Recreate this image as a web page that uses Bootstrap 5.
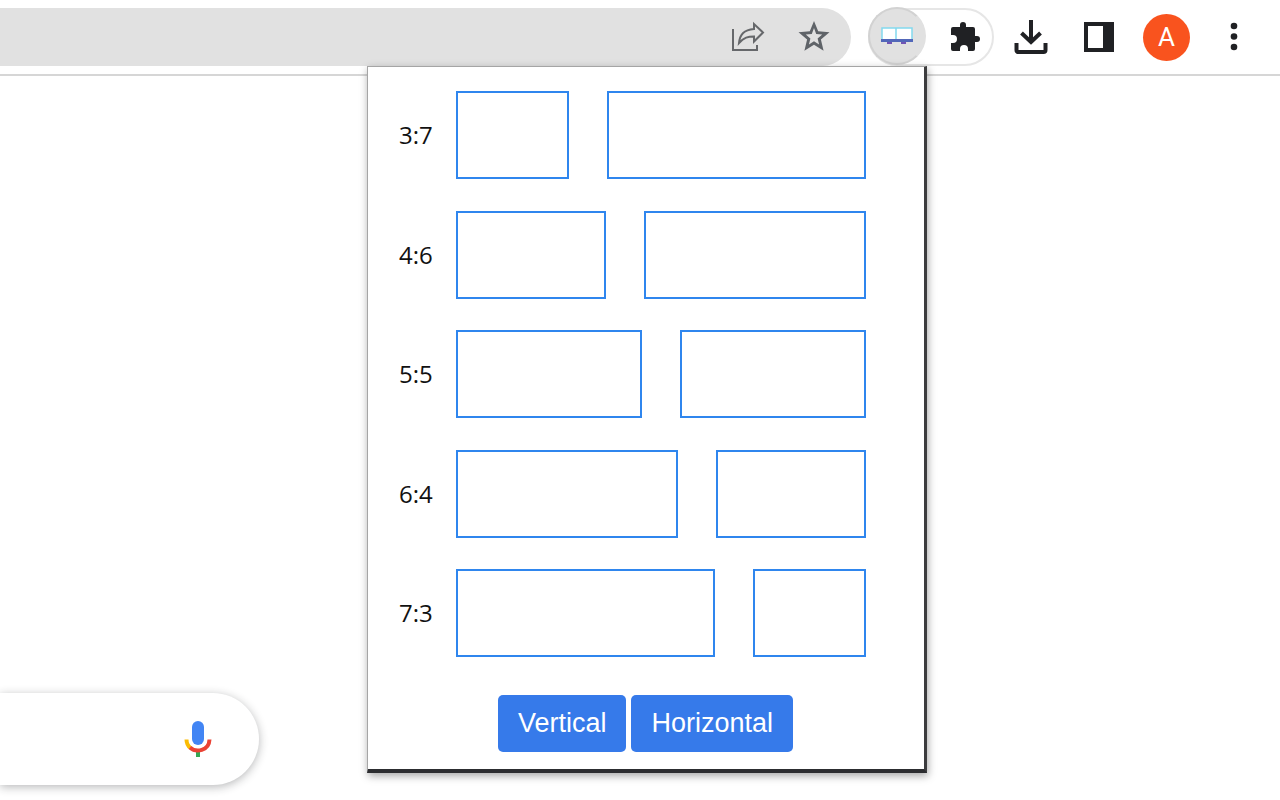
<!DOCTYPE html>
<html lang="en">
<head>
<meta charset="utf-8">
<meta name="viewport" content="width=device-width, initial-scale=1">
<title>Split window</title>
<link rel="stylesheet" href="https://cdn.jsdelivr.net/npm/bootstrap@5.3.0/dist/css/bootstrap.min.css">
<style>
  body { background: #fff; min-height: 100vh; overflow: hidden; font-family: "Liberation Sans", Arial, sans-serif; }
  svg { display: block; }
  .plain { background: none; border: 0; padding: 0; }
  .toolbar { height: 76px; padding: 8px 0 8px; border-bottom: 2px solid #d6d6d6; }
  .address { height: 58px; background: #e1e1e1; border-radius: 0 29px 29px 0; padding-right: 20px; gap: 31px; }
  .ext-group { height: 58px; width: 126px; margin-left: 17px; border: 2px solid #e6e6e6; border-radius: 29px; }
  .ext-group .active-ext { width: 58px; height: 58px; margin: -2px 0 0 -2px; border-radius: 50%; background: #e1e1e1; border: 2px solid #d2d2d2; border-right-color: #e1e1e1; }
  .tools { gap: 20px; padding: 0 22px 0 13px; }
  .tool { width: 48px; }
  .avatar { width: 47px; height: 47px; background: #f9531e; color: #fff; font: 26px Roboto, sans-serif; }
  .popup { top: 66px; right: 353px; width: 560px; padding: 24px 58px 17px 31px; background: #fff; border: 1px solid #a5a5a5; border-right: 3px solid #3c3c3e; border-bottom: 4px solid #2c2d30; box-shadow: 1px 3px 8px rgba(0,0,0,.35); }
  .ratios { min-height: 566px; }
  .ratio-label { width: 57px; font: 24px/32px "Open Sans", "Noto Sans", sans-serif; color: #111; text-align: left; }
  .panes { gap: 38px; height: 88px; }
  .pane { border: 2px solid #2f86ee; flex-basis: 0; }
  .directions { gap: 5px; margin: 38px -27px 0 0; }
  .directions { margin-left: -1px; }
  .btn-dir { --bs-btn-color: #fff; --bs-btn-bg: #367aea; --bs-btn-hover-color: #fff; --bs-btn-hover-bg: #2867d0; --bs-btn-border-width: 0; --bs-btn-padding-x: 20px; --bs-btn-padding-y: 12px; --bs-btn-font-size: 27px; --bs-btn-line-height: 33px; --bs-btn-border-radius: 5px; }
  .search { bottom: 15px; left: 0; width: 259px; height: 92px; padding-right: 47px; border-radius: 0 46px 46px 0; background: #fff; box-shadow: 0 2px 10px rgba(32,33,36,.32); }
  .search input { min-width: 0; box-shadow: none; }
</style>
</head>
<body class="position-relative">
<header class="toolbar d-flex align-items-start">
  <div class="address flex-grow-1 d-flex align-items-center justify-content-end">
    <button class="plain" type="button" aria-label="Share">
      <svg width="36" height="32" viewBox="0 0 36 32" fill="none" stroke="#66686b" stroke-width="2"><path d="M3 8v21h24v-5"/><path d="M9 22C10 13 14 9 24 8V3l9 8.500-9 9v-5c-6 0-10 1-15 6.500z"/></svg>
    </button>
    <button class="plain" type="button" aria-label="Bookmark">
      <svg width="34" height="32" viewBox="0 0 34 32" fill="#5f6368" fill-rule="evenodd"><path d="M17 0l4.200 10.300 11.300.9-8.600 7.300 2.700 11.200L17 23.700l-9.600 6 2.700-11.200-8.600-7.300 11.300-.9zM17 7l-2.200 6-6 .5 4.600 4-1.500 6L17 20.300l5.100 3.200-1.500-6 4.600-4-6-.5z"/></svg>
    </button>
  </div>
  <div class="ext-group d-flex align-items-center">
    <button class="plain active-ext d-flex align-items-center justify-content-center" type="button" aria-label="Split window">
      <svg width="34" height="20" viewBox="0 0 34 20"><path fill="#fff" stroke="#83d9ee" stroke-width="1.500" d="M2 2h30v12H2zM16 2v12"/><path fill="#5267b9" d="M1 13h32v3H1z"/><path fill="#7155b5" d="M7 16h5v2H7zM21 16h5v2h-5z"/></svg>
    </button>
    <button class="plain ms-4" type="button" aria-label="Extensions">
      <svg width="32" height="32" viewBox="0 0 32 32" fill="#202124"><path d="M3 6h7V4a3 3 0 0 1 6 0v2h7q2 0 2 2v7h2a3 3 0 0 1 0 6h-2v7q0 2-2 2h-5v-2a4 4 0 0 0-8 0v2H3q-2 0-2-2v-6h2a4 4 0 0 0 0-8H1V8q0-2 2-2z"/></svg>
    </button>
  </div>
  <div class="tools d-flex align-items-center align-self-stretch">
    <button class="plain tool" type="button" aria-label="Downloads">
      <svg class="mx-auto" width="36" height="36" viewBox="0 0 36 36" fill="none" stroke="#202124" stroke-width="4"><path d="M18 1v22M8.500 14l9.500 9 9.500-9"/><path d="M3.500 24v7q0 2 2 2h25q2 0 2-2v-7"/></svg>
    </button>
    <button class="plain tool" type="button" aria-label="Side panel">
      <svg class="mx-auto" width="32" height="32" viewBox="0 0 32 32"><path fill="#202124" fill-rule="evenodd" d="M1 1h30v30H1zM5 5v22h15V5z"/></svg>
    </button>
    <button class="plain avatar rounded-circle" type="button" aria-label="Profile A">A</button>
    <button class="plain tool" type="button" aria-label="Menu">
      <svg class="mx-auto" width="8" height="30" viewBox="0 0 8 30" fill="#202124"><circle cx="4" cy="4" r="3.300"/><circle cx="4" cy="14.500" r="3.300"/><circle cx="4" cy="25" r="3.300"/></svg>
    </button>
  </div>
</header>

<form class="search position-fixed d-flex align-items-center" role="search">
  <input class="form-control border-0 bg-transparent" type="search" aria-label="Search">
  <button class="plain" type="button" aria-label="Search by voice">
    <svg width="28" height="38" viewBox="0 0 28 38"><rect x="8" y="1" width="12" height="24" rx="6" fill="#4285f4"/><path fill="#34a853" d="M12 30h4v7h-4z"/><path d="M2.500 19.500C2.500 23 4 26 6.500 28" fill="none" stroke="#fbbc04" stroke-width="4"/><path d="M6 27.500c6 5.500 19 3.500 19.500-8" fill="none" stroke="#ea4335" stroke-width="4"/></svg>
  </button>
</form>

<main class="popup position-absolute">
  <div class="ratios d-flex flex-column justify-content-between">
    <button class="plain d-flex align-items-center" type="button"><span class="ratio-label">3:7</span><span class="panes d-flex flex-grow-1"><span class="pane" style="flex-grow:3"></span><span class="pane" style="flex-grow:7"></span></span></button>
    <button class="plain d-flex align-items-center" type="button"><span class="ratio-label">4:6</span><span class="panes d-flex flex-grow-1"><span class="pane" style="flex-grow:4"></span><span class="pane" style="flex-grow:6"></span></span></button>
    <button class="plain d-flex align-items-center" type="button"><span class="ratio-label">5:5</span><span class="panes d-flex flex-grow-1"><span class="pane" style="flex-grow:5"></span><span class="pane" style="flex-grow:5"></span></span></button>
    <button class="plain d-flex align-items-center" type="button"><span class="ratio-label">6:4</span><span class="panes d-flex flex-grow-1"><span class="pane" style="flex-grow:6"></span><span class="pane" style="flex-grow:4"></span></span></button>
    <button class="plain d-flex align-items-center" type="button"><span class="ratio-label">7:3</span><span class="panes d-flex flex-grow-1"><span class="pane" style="flex-grow:7"></span><span class="pane" style="flex-grow:3"></span></span></button>
  </div>
  <div class="directions d-flex justify-content-center">
    <button class="btn btn-dir" type="button">Vertical</button>
    <button class="btn btn-dir" type="button">Horizontal</button>
  </div>
</main>
<script src="https://cdn.jsdelivr.net/npm/bootstrap@5.3.0/dist/js/bootstrap.bundle.min.js"></script>
</body>
</html>
